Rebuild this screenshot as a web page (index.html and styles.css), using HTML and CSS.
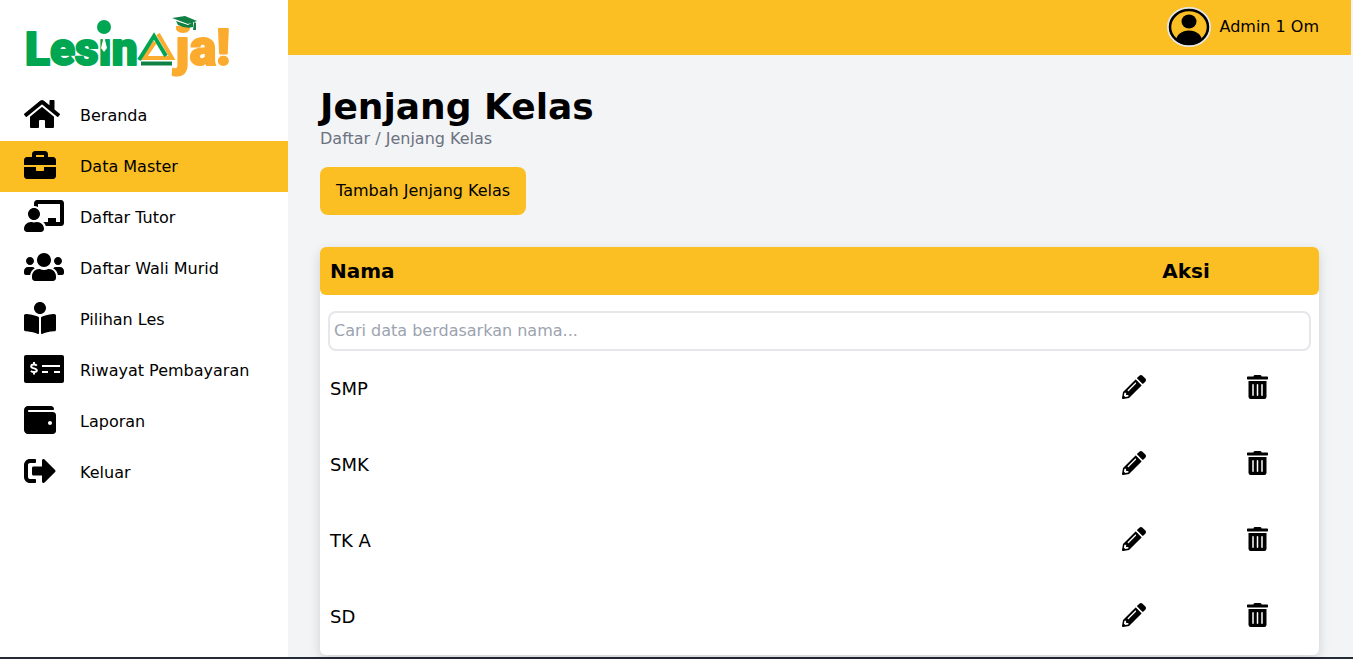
FILE: index.html
```html
<!DOCTYPE html>
<html lang="id">
<head>
<meta charset="utf-8">
<meta name="viewport" content="width=device-width, initial-scale=1">
<title>Jenjang Kelas</title>
<link rel="stylesheet" href="styles.css">
</head>
<body>
<svg class="defs" aria-hidden="true">
  <symbol id="pencil" viewBox="0 0 512 512"><path d="M497.9 142.1l-46.1 46.1c-4.7 4.7-12.3 4.7-17 0l-111-111c-4.7-4.7-4.7-12.3 0-17l46.1-46.1c18.7-18.7 49.1-18.7 67.9 0l60.1 60.1c18.8 18.7 18.8 49.1 0 67.9zM284.2 99.8L21.6 362.4.4 483.9c-2.9 16.4 11.4 30.6 27.8 27.8l121.5-21.3 262.6-262.6c4.7-4.7 4.7-12.3 0-17l-111-111c-4.8-4.7-12.4-4.7-17.1 0zM124.1 339.9c-5.5-5.5-5.5-14.3 0-19.8l154-154c5.5-5.5 14.3-5.5 19.8 0s5.5 14.3 0 19.8l-154 154c-5.5 5.5-14.3 5.5-19.8 0zM88 424h48v36.3l-64.500 11.300-31.100-31.100L51.700 376H88v48z"/></symbol>
  <symbol id="trash" viewBox="0 0 448 512"><path fill-rule="evenodd" d="M32 464a48 48 0 0 0 48 48h288a48 48 0 0 0 48-48V128H32zM304 208a16 16 0 0 1 32 0v224a16 16 0 0 1-32 0zM208 208a16 16 0 0 1 32 0v224a16 16 0 0 1-32 0zM112 208a16 16 0 0 1 32 0v224a16 16 0 0 1-32 0zM432 32H312l-9.400-18.700A24 24 0 0 0 281.100 0H166.800a23.720 23.720 0 0 0-21.400 13.300L136 32H16A16 16 0 0 0 0 48v32a16 16 0 0 0 16 16h416a16 16 0 0 0 16-16V48a16 16 0 0 0-16-16z"/></symbol>
</svg>
<div class="app">
  <aside class="sidebar">
    <a class="logo" href="#" aria-label="Lesin Aja!">
      <svg viewBox="0 0 288 90" width="288" height="90">
        <g class="logo-text">
          <text class="logo-green" x="25" y="65">Les&#305;n</text>
          <text class="logo-orange" x="175" y="65">&#567;a!</text>
        </g>
        <circle cx="104" cy="27" r="7" fill="#00a651"/>
        <path d="M101 36h6l-2 4 2 8-3 4-3-4 2-8z" fill="#fff"/>
        <path d="M176 26h14q1 7-7 7t-7-7z" fill="#fbab2e"/>
        <path d="M172 18l13-2 12 5-9 3-16-6zM176 21l12 4 5-3v5q-7 2-15-2zM194 22l2 1v7h-3z" fill="#118044"/>
        <g fill="none" stroke-width="4">
          <path d="M158 34L172 58H144L155 42" stroke="#fbab2e"/>
          <path d="M139 60L154 36L166 56" stroke="#00a651"/>
          <path d="M141 63.500H172" stroke="#118044"/>
        </g>
      </svg>
    </a>
    <nav class="menu">
      <a class="item" href="#"><span class="icon"><svg viewBox="0 0 576 512" width="36" height="32"><path d="M280.370 148.260L96 300.110V464a16 16 0 0 0 16 16l112.060-.290a16 16 0 0 0 15.920-16V368a16 16 0 0 1 16-16h64a16 16 0 0 1 16 16v95.640a16 16 0 0 0 16 16.050L464 480a16 16 0 0 0 16-16V300L295.670 148.260a12.190 12.190 0 0 0-15.300 0zM571.600 251.470L488 182.560V44.050a12 12 0 0 0-12-12h-56a12 12 0 0 0-12 12v72.610L318.470 43a48 48 0 0 0-61 0L4.340 251.470a12 12 0 0 0-1.600 16.900l25.500 31A12 12 0 0 0 45.150 301l235.220-193.740a12.190 12.190 0 0 1 15.300 0L530.900 301a12 12 0 0 0 16.900-1.600l25.500-31a12 12 0 0 0-1.700-16.930z"/></svg></span>Beranda</a>
      <a class="item active" href="#"><span class="icon"><svg viewBox="0 0 512 512" width="32" height="32"><path d="M320 336c0 8.840-7.160 16-16 16h-96c-8.840 0-16-7.160-16-16v-48H0v144c0 25.600 22.400 48 48 48h416c25.600 0 48-22.400 48-48V288H320v48zm144-208h-80V80c0-25.600-22.400-48-48-48H176c-25.600 0-48 22.400-48 48v48H48c-25.600 0-48 22.400-48 48v80h512v-80c0-25.600-22.400-48-48-48zm-144 0H192V96h128v32z"/></svg></span>Data Master</a>
      <a class="item" href="#"><span class="icon"><svg viewBox="0 0 640 512" width="40" height="32"><path d="M208 352c-2.390 0-4.780.350-7.060 1.090C187.980 357.300 174.350 360 160 360c-14.350 0-27.980-2.700-40.950-6.910-2.280-.740-4.660-1.090-7.050-1.090C49.940 352-.330 402.480 0 464.620.140 490.880 21.730 512 48 512h224c26.270 0 47.860-21.120 48-47.380.330-62.140-49.940-112.620-112-112.620zm-48-32c53.020 0 96-42.980 96-96s-42.980-96-96-96-96 42.980-96 96 42.980 96 96 96zM592 0H208c-26.470 0-48 22.250-48 49.590V96c23.420 0 45.100 6.780 64 17.800V64h352v288h-64v-64H384v64h-76.240c19.100 16.690 33.120 38.730 39.690 64H592c26.470 0 48-22.250 48-49.590V49.590C640 22.250 618.470 0 592 0z"/></svg></span>Daftar Tutor</a>
      <a class="item" href="#"><span class="icon"><svg viewBox="0 0 640 512" width="40" height="32"><path d="M96 224c35.300 0 64-28.700 64-64s-28.700-64-64-64-64 28.700-64 64 28.700 64 64 64zm448 0c35.300 0 64-28.700 64-64s-28.700-64-64-64-64 28.700-64 64 28.700 64 64 64zm32 32h-64c-17.600 0-33.500 7.100-45.100 18.600 40.300 22.100 68.900 62 75.100 109.400h66c17.700 0 32-14.300 32-32v-32c0-35.300-28.700-64-64-64zm-256 0c61.900 0 112-50.100 112-112S381.900 32 320 32 208 82.100 208 144s50.100 112 112 112zm76.800 32h-8.300c-20.800 10-43.900 16-68.500 16s-47.600-6-68.500-16h-8.300C179.600 288 128 339.600 128 403.200V432c0 26.500 21.500 48 48 48h288c26.500 0 48-21.500 48-48v-28.800c0-63.600-51.600-115.200-115.200-115.200zm-223.700-13.400C161.500 263.100 145.600 256 128 256H64c-35.300 0-64 28.700-64 64v32c0 17.700 14.300 32 32 32h65.900c6.300-47.400 34.900-87.300 75.200-109.400z"/></svg></span>Daftar Wali Murid</a>
      <a class="item" href="#"><span class="icon"><svg viewBox="0 0 512 512" width="32" height="32"><path d="M352 96c0-53.020-42.980-96-96-96s-96 42.980-96 96 42.980 96 96 96 96-42.980 96-96zM233.590 241.100c-59.330-36.320-155.430-46.300-203.790-49.050C13.550 191.130 0 203.510 0 219.140v222.800c0 14.330 11.590 26.280 26.490 27.050 43.660 2.290 131.990 10.680 193.040 41.430 9.370 4.720 20.480-1.710 20.480-11.870V252.560c-.010-4.670-2.320-8.950-6.420-11.460zm248.610-49.050c-48.350 2.740-144.460 12.730-203.780 49.050-4.100 2.510-6.410 6.960-6.410 11.630v245.790c0 10.190 11.140 16.630 20.540 11.900 61.040-30.720 149.320-39.110 192.970-41.400 14.900-.780 26.490-12.730 26.490-27.060V219.140c-.010-15.630-13.560-28.010-29.810-27.090z"/></svg></span>Pilihan Les</a>
      <a class="item" href="#"><span class="icon"><svg viewBox="0 0 40 32" width="40" height="32"><rect y="2" width="40" height="28" rx="2"/><path d="M18 13h18M18 19h6M30 19h6" fill="none" stroke="#fff" stroke-width="2"/><path d="M10 9v2.500M10 19v2.500M12.800 12.600C11.500 11.200 7.200 11 7.200 13.400C7.200 15.700 12.800 15 12.800 17.300C12.800 19.700 8.500 19.500 6.900 17.900" fill="none" stroke="#fff" stroke-width="2"/></svg></span>Riwayat Pembayaran</a>
      <a class="item" href="#"><span class="icon"><svg viewBox="0 0 512 512" width="32" height="32"><path d="M461.200 128H80c-8.840 0-16-7.160-16-16s7.160-16 16-16h384c8.840 0 16-7.160 16-16 0-26.510-21.490-48-48-48H64C28.650 32 0 60.650 0 96v320c0 35.350 28.650 64 64 64h397.200c28.020 0 50.800-21.530 50.800-48V176c0-26.470-22.780-48-50.800-48zM416 336c-17.670 0-32-14.330-32-32s14.330-32 32-32 32 14.330 32 32-14.330 32-32 32z"/></svg></span>Laporan</a>
      <a class="item" href="#"><span class="icon"><svg viewBox="0 0 512 512" width="32" height="32"><path d="M497 273L329 441c-15 15-41 4.500-41-17v-96H152c-13.300 0-24-10.700-24-24v-96c0-13.300 10.700-24 24-24h136V88c0-21.400 25.900-32 41-17l168 168c9.300 9.400 9.300 24.600 0 34zM192 436v-40c0-6.600-5.400-12-12-12H96c-17.700 0-32-14.300-32-32V160c0-17.700 14.300-32 32-32h84c6.600 0 12-5.400 12-12V76c0-6.600-5.400-12-12-12H96c-53 0-96 43-96 96v192c0 53 43 96 96 96h84c6.600 0 12-5.400 12-12z"/></svg></span>Keluar</a>
    </nav>
  </aside>
  <div class="page">
    <header class="topbar">
      <a class="user" href="#">
        <svg class="avatar" viewBox="0 0 44 40" width="44" height="40" aria-hidden="true">
          <defs><clipPath id="face"><ellipse cx="22" cy="20" rx="20" ry="18"/></clipPath></defs>
          <ellipse cx="22" cy="20" rx="21" ry="19" fill="#fbbf24" stroke="#e5e7eb" stroke-width="2"/>
          <g clip-path="url(#face)"><ellipse cx="22" cy="14.500" rx="7.500" ry="7"/><ellipse cx="22" cy="34" rx="13" ry="10.500"/></g>
          <ellipse cx="22" cy="20" rx="19" ry="17" fill="none" stroke="#000" stroke-width="2.500"/>
        </svg>
        <span>Admin 1 Om</span>
      </a>
    </header>
    <main class="content">
      <h1 class="title">Jenjang Kelas</h1>
      <p class="crumb">Daftar / Jenjang Kelas</p>
      <button class="add" type="button">Tambah Jenjang Kelas</button>
      <table class="card">
        <colgroup><col><col class="col-action"><col class="col-action"></colgroup>
        <thead>
          <tr><th class="name" scope="col">Nama</th><th class="action-head" scope="colgroup" colspan="2">Aksi</th></tr>
        </thead>
        <tbody>
          <tr><td class="search-cell" colspan="3"><input class="search" type="text" aria-label="Cari data berdasarkan nama" placeholder="Cari data berdasarkan nama..."></td></tr>
          <tr class="row"><td class="name">SMP</td><td><button class="act" type="button" aria-label="Ubah SMP"><svg width="24" height="24"><use href="#pencil"/></svg></button></td><td><button class="act" type="button" aria-label="Hapus SMP"><svg width="21" height="24"><use href="#trash"/></svg></button></td></tr>
          <tr class="row"><td class="name">SMK</td><td><button class="act" type="button" aria-label="Ubah SMK"><svg width="24" height="24"><use href="#pencil"/></svg></button></td><td><button class="act" type="button" aria-label="Hapus SMK"><svg width="21" height="24"><use href="#trash"/></svg></button></td></tr>
          <tr class="row"><td class="name">TK A</td><td><button class="act" type="button" aria-label="Ubah TK A"><svg width="24" height="24"><use href="#pencil"/></svg></button></td><td><button class="act" type="button" aria-label="Hapus TK A"><svg width="21" height="24"><use href="#trash"/></svg></button></td></tr>
          <tr class="row"><td class="name">SD</td><td><button class="act" type="button" aria-label="Ubah SD"><svg width="24" height="24"><use href="#pencil"/></svg></button></td><td><button class="act" type="button" aria-label="Hapus SD"><svg width="21" height="24"><use href="#trash"/></svg></button></td></tr>
        </tbody>
      </table>
    </main>
  </div>
</div>
</body>
</html>
```
FILE: styles.css
```css
*, *::before, *::after { box-sizing: border-box; }
body {
  margin: 0;
  background: #f3f4f6;
  color: #000;
  font-family: "DejaVu Sans", sans-serif;
  font-size: 16px;
  line-height: 24px;
}
svg { display: block; }
button, input { font: inherit; color: inherit; }
.defs { display: none; }
.app {
  display: flex;
  min-height: 100vh;
  border-bottom: 2px solid #252a37;
}
.sidebar {
  flex: 0 0 288px;
  background: #fff;
}
.logo { display: block; }
.logo-text {
  font-family: Roboto, sans-serif;
  font-weight: 900;
  stroke-width: 2;
  stroke-linejoin: round;
}
.logo-green { fill: #00a651; stroke: #00a651; font-size: 46px; }
.logo-orange { fill: #fbab2e; stroke: #fbab2e; font-size: 50px; }
.item {
  display: flex;
  align-items: center;
  gap: 16px;
  padding: 8px 24px;
  color: inherit;
  text-decoration: none;
}
.item.active { background: #fbbf24; }
.icon {
  flex: 0 0 40px;
  height: 35px;
}
.page {
  flex: 1;
  min-width: 0;
  padding-right: 2px;
}
.topbar {
  display: flex;
  justify-content: flex-end;
  padding: 7px 32px 8px;
  background: #fbbf24;
}
.user {
  display: flex;
  align-items: center;
  gap: 8px;
  color: inherit;
  text-decoration: none;
}
.content { padding: 32px 32px 2px; }
.title {
  margin: 0;
  font-size: 36px;
  line-height: 40px;
}
.crumb { margin: 0 0 16px; color: #6b7280; }
.add {
  display: block;
  margin-bottom: 32px;
  padding: 12px 16px;
  border: 0;
  border-radius: 8px;
  background: #fbbf24;
}
.card {
  width: 100%;
  table-layout: fixed;
  border-collapse: separate;
  border-spacing: 0;
  border-radius: 6px;
  background: #fff;
  box-shadow: 0 4px 12px rgba(0, 0, 0, 0.15);
}
.col-action { width: 123px; }
th {
  height: 48px;
  background: #fbbf24;
  font-size: 20px;
}
th:first-child { border-radius: 6px 0 0 6px; }
th:last-child { border-radius: 0 6px 6px 0; }
td { padding: 0; }
.name { padding: 0 10px; text-align: left; }
.action-head { padding: 0 20px 0 0; text-align: center; }
.search-cell { padding: 16px 8px 0; }
.search {
  display: block;
  width: 100%;
  height: 40px;
  padding: 0 4px 2px;
  border: 2px solid #e5e7eb;
  border-radius: 8px;
  background: #fff;
}
.search::placeholder { color: #9ca3af; opacity: 1; }
.row { height: 76px; font-size: 18px; }
.act {
  display: block;
  margin: 0 auto;
  padding: 0 0 4px;
  border: 0;
  background: none;
}
```
